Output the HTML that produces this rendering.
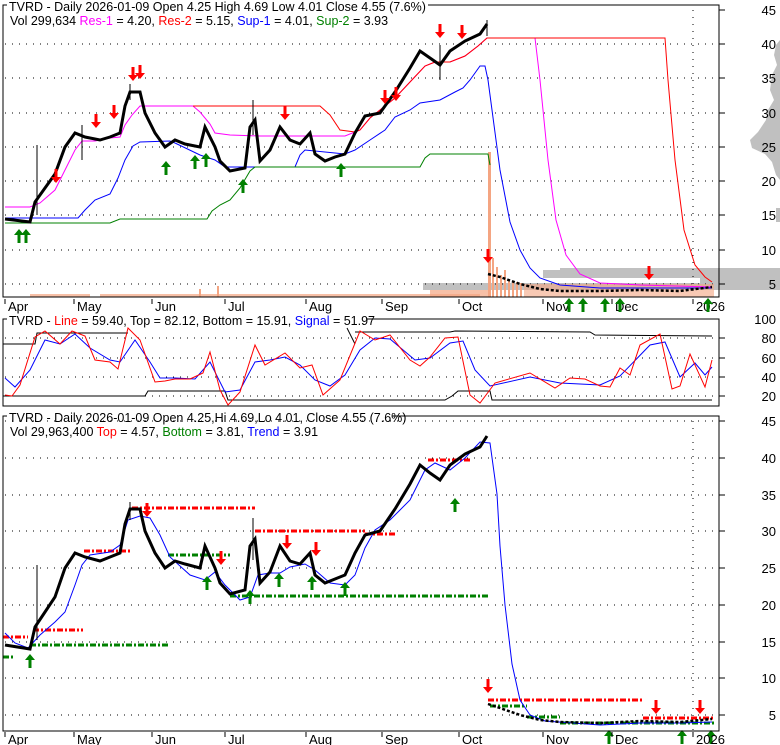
<!DOCTYPE html>
<html><head><meta charset="utf-8"><style>
html,body{margin:0;padding:0;background:#fff;}
svg{display:block;font-family:"Liberation Sans",Arial,sans-serif;}
</style></head><body>
<svg width="780" height="745" viewBox="0 0 780 745" xmlns="http://www.w3.org/2000/svg">
<defs>
<g id="up"><path d="M0,-7 L5,-1 L1.5,-1 L1.5,7 L-1.5,7 L-1.5,-1 L-5,-1 Z" fill="#008000"/></g>
<g id="dn"><path d="M0,7 L5,1 L1.5,1 L1.5,-7 L-1.5,-7 L-1.5,1 L-5,1 Z" fill="#ff0000"/></g>
</defs>
<rect width="780" height="745" fill="#fff"/>

<!-- ===== PANEL 1 ===== -->
<g fill="#c0c0c0">
<rect x="543" y="270" width="237" height="8"/>
<rect x="560" y="268" width="220" height="4"/>
<rect x="423" y="283" width="357" height="7"/>
<rect x="700" y="278" width="80" height="6"/>
<path d="M780,40 L776,45 L774,55 L777,65 L772,75 L770,90 L774,100 L768,110 L766,120 L758,132 L750,140 L752,148 L765,154 L772,162 L776,175 L780,180 Z"/>
<rect x="776" y="208" width="4" height="14"/>
</g>
<g stroke="#000" stroke-width="1" stroke-dasharray="1,6">
<line x1="5" y1="44" x2="718" y2="44"/><line x1="5" y1="78" x2="718" y2="78"/>
<line x1="5" y1="113" x2="718" y2="113"/><line x1="5" y1="147" x2="718" y2="147"/>
<line x1="5" y1="181" x2="718" y2="181"/><line x1="5" y1="215" x2="718" y2="215"/>
<line x1="5" y1="250" x2="718" y2="250"/><line x1="5" y1="284" x2="718" y2="284"/>
<line x1="693" y1="10" x2="693" y2="296"/>
</g>
<g fill="#f4a582">
<rect x="30" y="294" width="60" height="3" opacity=".7"/>
<rect x="100" y="294" width="380" height="3" opacity=".7"/>
<rect x="199" y="289" width="2" height="8"/><rect x="217" y="286" width="2" height="11"/>
<rect x="488" y="152" width="3" height="145"/><rect x="492" y="258" width="2" height="39"/>
<rect x="496" y="267" width="2" height="30"/><rect x="500" y="275" width="2" height="22"/>
<rect x="504" y="270" width="2" height="27"/><rect x="508" y="279" width="2" height="18"/>
<rect x="512" y="281" width="2" height="16"/><rect x="516" y="282" width="2" height="15"/>
<rect x="520" y="283" width="2" height="14"/><rect x="524" y="284" width="190" height="13" opacity=".6"/>
<rect x="430" y="290" width="58" height="7" opacity=".7"/>
</g>
<polyline fill="none" stroke="#ff00ff" stroke-width="1" points="5,207 30,207 40,203 55,190 65,170 75,150 82,141 95,141 110,138 120,137 125,125 132,115 140,106 193,106 200,112 210,124 215,133 230,135 260,136 345,136 360,130 370,118 380,110 395,98 410,82 425,66 435,62 450,62 465,56 478,46 487,38 535,38 540,80 548,160 556,220 566,255 580,274 600,283 640,285 712,287"/>
<polyline fill="none" stroke="#ff0000" stroke-width="1" points="193,106 320,106 330,115 340,130 355,132 360,130 370,118 380,110 395,98 410,82 425,66 435,62 450,62 465,56 478,46 487,38 665,38 668,80 675,160 684,230 695,265 705,277 712,282"/>
<polyline fill="none" stroke="#0000ff" stroke-width="1" points="5,218 78,218 85,210 95,200 110,194 118,178 125,160 133,146 140,142 170,141 175,143 200,155 215,160 225,167 245,167 295,167 300,155 305,150 345,154 355,150 370,140 385,130 395,117 410,110 420,103 440,100 455,92 463,88 470,80 480,66 485,66 488,80 492,110 500,170 510,222 520,250 530,268 540,278 560,285 600,288 712,288"/>
<polyline fill="none" stroke="#008000" stroke-width="1" points="5,223 110,223 120,219 207,219 212,211 220,205 230,200 240,188 250,171 255,167 420,167 425,158 430,154 488,154 490,165"/>
<polyline fill="none" stroke="#000" stroke-width="3" points="5,219 30,222 35,202 45,188 55,174 65,147 75,133 85,137 100,140 110,137 120,133 125,106 130,92 140,92 145,113 155,133 165,147 175,140 185,144 200,147 205,127 215,147 220,161 230,171 245,168 250,127 255,120 260,161 270,150 280,127 290,140 300,144 310,133 315,154 325,161 335,157 345,154 355,133 365,116 380,113 395,92 410,68 420,51 430,58 440,65 450,51 465,41 480,34 487,24"/>
<polyline fill="none" stroke="#000" stroke-width="2.5" stroke-dasharray="3,2" points="488,274 500,277 520,284 540,289 560,291 600,291 640,290 680,291 712,287"/>
<g stroke="#000" stroke-width="1">
<line x1="37" y1="145" x2="37" y2="215"/><line x1="82" y1="125" x2="82" y2="160"/><line x1="130" y1="84" x2="130" y2="100"/>
<line x1="253" y1="100" x2="253" y2="135"/><line x1="487" y1="20" x2="487" y2="36"/><line x1="440" y1="45" x2="440" y2="80"/>
</g>
<use href="#up" x="19" y="236"/><use href="#up" x="26" y="236"/><use href="#up" x="166" y="168"/><use href="#up" x="195" y="162"/>
<use href="#up" x="206" y="160"/><use href="#up" x="243" y="186"/><use href="#up" x="341" y="170"/>
<use href="#dn" x="56" y="176"/><use href="#dn" x="96" y="121"/><use href="#dn" x="114" y="112"/><use href="#dn" x="133" y="74"/>
<use href="#dn" x="140" y="72"/><use href="#dn" x="285" y="113"/><use href="#dn" x="385" y="97"/><use href="#dn" x="396" y="94"/>
<use href="#dn" x="440" y="31"/><use href="#dn" x="462" y="32"/><use href="#dn" x="488" y="256"/><use href="#dn" x="649" y="273"/>
<polyline fill="none" stroke="#000" points="3,12 3,5 7,5"/>
<polyline fill="none" stroke="#000" points="428,5 719,5 719,297 3,297 3,12"/>
<g stroke="#000"><line x1="719" y1="10" x2="725" y2="10"/><line x1="719" y1="44" x2="725" y2="44"/><line x1="719" y1="78" x2="725" y2="78"/><line x1="719" y1="113" x2="725" y2="113"/><line x1="719" y1="147" x2="725" y2="147"/><line x1="719" y1="181" x2="725" y2="181"/><line x1="719" y1="215" x2="725" y2="215"/><line x1="719" y1="250" x2="725" y2="250"/><line x1="719" y1="284" x2="725" y2="284"/></g>
<g font-size="13" fill="#000" text-anchor="end">
<text x="776" y="15">45</text><text x="776" y="49">40</text><text x="776" y="83">35</text><text x="776" y="118">30</text><text x="776" y="152">25</text><text x="776" y="186">20</text><text x="776" y="220">15</text><text x="776" y="255">10</text><text x="776" y="289">5</text>
</g>
<g font-size="12.5">
<text x="9" y="11">TVRD - Daily 2026-01-09 Open 4.25  High 4.69  Low 4.01  Close 4.55  (7.6%)</text>
<text x="10" y="25">Vol 299,634 <tspan fill="#ff00ff">Res-1</tspan> = 4.20, <tspan fill="#ff0000">Res-2</tspan> = 5.15, <tspan fill="#0000ff">Sup-1</tspan> = 4.01, <tspan fill="#008000">Sup-2</tspan> = 3.93</text>
</g>
<g stroke="#000"><line x1="5" y1="299" x2="5" y2="304"/><line x1="74" y1="299" x2="74" y2="304"/><line x1="152" y1="299" x2="152" y2="304"/><line x1="225" y1="299" x2="225" y2="304"/><line x1="306" y1="299" x2="306" y2="304"/><line x1="382" y1="299" x2="382" y2="304"/><line x1="459" y1="299" x2="459" y2="304"/><line x1="543" y1="299" x2="543" y2="304"/><line x1="612" y1="299" x2="612" y2="304"/><line x1="693" y1="299" x2="693" y2="304"/></g>
<g font-size="13"><text x="8" y="311">Apr</text><text x="77" y="311">May</text><text x="155" y="311">Jun</text><text x="228" y="311">Jul</text><text x="309" y="311">Aug</text><text x="385" y="311">Sep</text><text x="462" y="311">Oct</text><text x="546" y="311">Nov</text><text x="615" y="311">Dec</text><text x="696" y="311">2026</text></g>
<use href="#up" x="569" y="305"/><use href="#up" x="583" y="305"/><use href="#up" x="605" y="305"/><use href="#up" x="620" y="305"/><use href="#up" x="708" y="305"/>

<!-- ===== PANEL 2 ===== -->
<g stroke="#000" stroke-dasharray="1,6"><line x1="5" y1="338" x2="718" y2="338"/><line x1="5" y1="358" x2="718" y2="358"/><line x1="5" y1="377" x2="718" y2="377"/><line x1="5" y1="396" x2="718" y2="396"/></g>
<polyline fill="none" stroke="#000" points="3,344 35,344 37,333 128,333"/>
<polyline fill="none" stroke="#000" points="347,328 355,344"/>
<polyline fill="none" stroke="#000" points="355,332 450,332 455,331 590,332 595,335 712,336"/>
<polyline fill="none" stroke="#000" points="3,396 145,396 148,391 225,391 228,400 445,400 452,396 458,391 490,391 492,400 712,400"/>
<polyline fill="none" stroke="#0000ff" stroke-width="1" points="5,378 15,387 30,370 45,340 60,344 75,334 90,348 110,360 120,362 135,340 150,362 160,378 175,378 195,379 210,362 225,392 240,390 255,362 270,360 285,357 300,365 315,380 330,386 345,375 360,350 375,338 390,339 415,360 430,358 450,343 463,341 475,370 490,386 530,377 560,383 600,385 620,376 650,345 665,342 680,377 695,363 705,375 712,367"/>
<polyline fill="none" stroke="#ff0000" stroke-width="1" points="5,395 12,396 20,385 35,337 45,331 60,344 72,331 85,336 95,360 110,362 118,369 128,328 140,340 155,382 165,381 175,379 190,379 203,373 210,352 220,390 228,405 240,392 255,345 265,365 285,353 300,368 312,365 323,395 340,380 360,331 375,340 390,335 410,360 420,366 430,357 445,338 458,337 470,395 480,403 495,383 530,373 555,388 570,378 585,379 600,386 610,387 620,368 630,375 640,345 660,334 672,389 680,386 690,354 705,387 712,360"/>
<polyline fill="none" stroke="#000" points="3,326 3,319 7,319"/>
<polyline fill="none" stroke="#000" points="366,319 719,319 719,406 3,406 3,326"/>
<g stroke="#000"><line x1="719" y1="338" x2="725" y2="338"/><line x1="719" y1="358" x2="725" y2="358"/><line x1="719" y1="377" x2="725" y2="377"/><line x1="719" y1="396" x2="725" y2="396"/></g>
<g font-size="13" text-anchor="end"><text x="776" y="324">100</text><text x="776" y="343">80</text><text x="776" y="363">60</text><text x="776" y="382">40</text><text x="776" y="401">20</text></g>
<text x="9" y="325" font-size="12.5">TVRD - <tspan fill="#ff0000">Line</tspan> = 59.40, Top = 82.12, Bottom = 15.91, <tspan fill="#0000ff">Signal</tspan> = 51.97</text>

<!-- ===== PANEL 3 ===== -->
<g stroke="#000" stroke-dasharray="1,6">
<line x1="5" y1="421" x2="718" y2="421"/><line x1="5" y1="458" x2="718" y2="458"/><line x1="5" y1="495" x2="718" y2="495"/><line x1="5" y1="531" x2="718" y2="531"/><line x1="5" y1="568" x2="718" y2="568"/><line x1="5" y1="605" x2="718" y2="605"/><line x1="5" y1="642" x2="718" y2="642"/><line x1="5" y1="678" x2="718" y2="678"/><line x1="5" y1="715" x2="718" y2="715"/>
<line x1="693" y1="421" x2="693" y2="731"/>
</g>
<g fill="none" stroke-width="3" stroke-dasharray="6,2,2,2">
<g stroke="#ff0000">
<line x1="3" y1="637" x2="28" y2="637"/><line x1="33" y1="630" x2="83" y2="630"/><line x1="84" y1="551" x2="130" y2="551"/>
<line x1="132" y1="508" x2="255" y2="508"/><line x1="255" y1="531" x2="365" y2="531"/><line x1="365" y1="534" x2="395" y2="534"/>
<line x1="428" y1="460" x2="470" y2="460"/><line x1="488" y1="700" x2="643" y2="700"/><line x1="643" y1="718" x2="715" y2="718"/>
</g>
<g stroke="#008000">
<line x1="3" y1="657" x2="13" y2="657"/><line x1="30" y1="645" x2="168" y2="645"/><line x1="168" y1="555" x2="230" y2="555"/>
<line x1="230" y1="596" x2="490" y2="596"/><line x1="490" y1="706" x2="527" y2="706"/><line x1="527" y1="717" x2="560" y2="717"/>
<line x1="560" y1="723" x2="715" y2="723"/>
</g></g>
<polyline fill="none" stroke="#0000ff" stroke-width="1" points="5,633 15,643 28,648 40,635 55,622 65,612 75,585 82,565 90,555 110,552 120,545 128,520 140,516 150,518 160,535 170,557 190,575 205,580 215,572 225,585 240,600 250,597 258,575 270,573 280,573 290,567 305,564 315,570 330,583 345,585 355,575 365,548 375,530 390,520 400,510 410,500 425,470 435,463 450,470 465,458 480,442 490,443 497,494 500,546 505,605 512,664 520,700 530,715 545,721 600,725 640,723 680,723 712,722"/>
<polyline fill="none" stroke="#000" stroke-width="3" points="5,645 30,649 35,627 45,612 55,597 65,568 75,553 85,557 100,561 110,557 120,553 125,524 130,509 140,509 145,531 155,553 165,568 175,561 185,564 200,568 205,546 215,568 220,583 230,594 245,590 250,546 255,539 260,583 270,572 280,546 290,561 300,564 310,553 315,575 325,583 335,579 345,575 355,553 365,535 380,531 395,509 410,484 420,465 430,473 440,480 450,465 465,454 480,447 487,436"/>
<polyline fill="none" stroke="#000" stroke-width="2.5" stroke-dasharray="3,2" points="488,704 500,708 520,715 540,720 560,722 600,723 640,721 680,722 712,719"/>
<g stroke="#000" stroke-width="1"><line x1="37" y1="565" x2="37" y2="640"/><line x1="253" y1="518" x2="253" y2="560"/><line x1="130" y1="502" x2="130" y2="520"/></g>
<use href="#up" x="30" y="661"/><use href="#up" x="207" y="583"/><use href="#up" x="250" y="597"/><use href="#up" x="279" y="580"/><use href="#up" x="312" y="583"/><use href="#up" x="345" y="589"/><use href="#up" x="455" y="505"/><use href="#up" x="609" y="737"/><use href="#up" x="682" y="737"/><use href="#up" x="711" y="737"/>
<use href="#dn" x="147" y="510"/><use href="#dn" x="221" y="558"/><use href="#dn" x="287" y="542"/><use href="#dn" x="316" y="549"/><use href="#dn" x="488" y="686"/><use href="#dn" x="656" y="707"/><use href="#dn" x="700" y="707"/>
<polyline fill="none" stroke="#000" points="3,423 3,416 7,416"/>
<polyline fill="none" stroke="#000" points="392,416 719,416 719,731 3,731 3,423"/>
<g stroke="#000"><line x1="719" y1="421" x2="725" y2="421"/><line x1="719" y1="458" x2="725" y2="458"/><line x1="719" y1="495" x2="725" y2="495"/><line x1="719" y1="531" x2="725" y2="531"/><line x1="719" y1="568" x2="725" y2="568"/><line x1="719" y1="605" x2="725" y2="605"/><line x1="719" y1="642" x2="725" y2="642"/><line x1="719" y1="678" x2="725" y2="678"/><line x1="719" y1="715" x2="725" y2="715"/></g>
<g font-size="13" text-anchor="end"><text x="776" y="426">45</text><text x="776" y="463">40</text><text x="776" y="500">35</text><text x="776" y="536">30</text><text x="776" y="573">25</text><text x="776" y="610">20</text><text x="776" y="647">15</text><text x="776" y="683">10</text><text x="776" y="720">5</text></g>
<g font-size="12.5">
<text x="9" y="422">TVRD - Daily 2026-01-09 Open 4.25,Hi 4.69,Lo 4.01, Close 4.55 (7.6%)</text>
<text x="10" y="436">Vol 29,963,400 <tspan fill="#ff0000">Top</tspan> = 4.57, <tspan fill="#008000">Bottom</tspan> = 3.81, <tspan fill="#0000ff">Trend</tspan> = 3.91</text>
</g>
<g stroke="#000"><line x1="5" y1="732" x2="5" y2="737"/><line x1="74" y1="732" x2="74" y2="737"/><line x1="152" y1="732" x2="152" y2="737"/><line x1="225" y1="732" x2="225" y2="737"/><line x1="306" y1="732" x2="306" y2="737"/><line x1="382" y1="732" x2="382" y2="737"/><line x1="459" y1="732" x2="459" y2="737"/><line x1="543" y1="732" x2="543" y2="737"/><line x1="612" y1="732" x2="612" y2="737"/><line x1="693" y1="732" x2="693" y2="737"/></g>
<g font-size="13"><text x="8" y="744">Apr</text><text x="77" y="744">May</text><text x="155" y="744">Jun</text><text x="228" y="744">Jul</text><text x="309" y="744">Aug</text><text x="385" y="744">Sep</text><text x="462" y="744">Oct</text><text x="546" y="744">Nov</text><text x="615" y="744">Dec</text><text x="696" y="744">2026</text></g>
</svg>
</body></html>
